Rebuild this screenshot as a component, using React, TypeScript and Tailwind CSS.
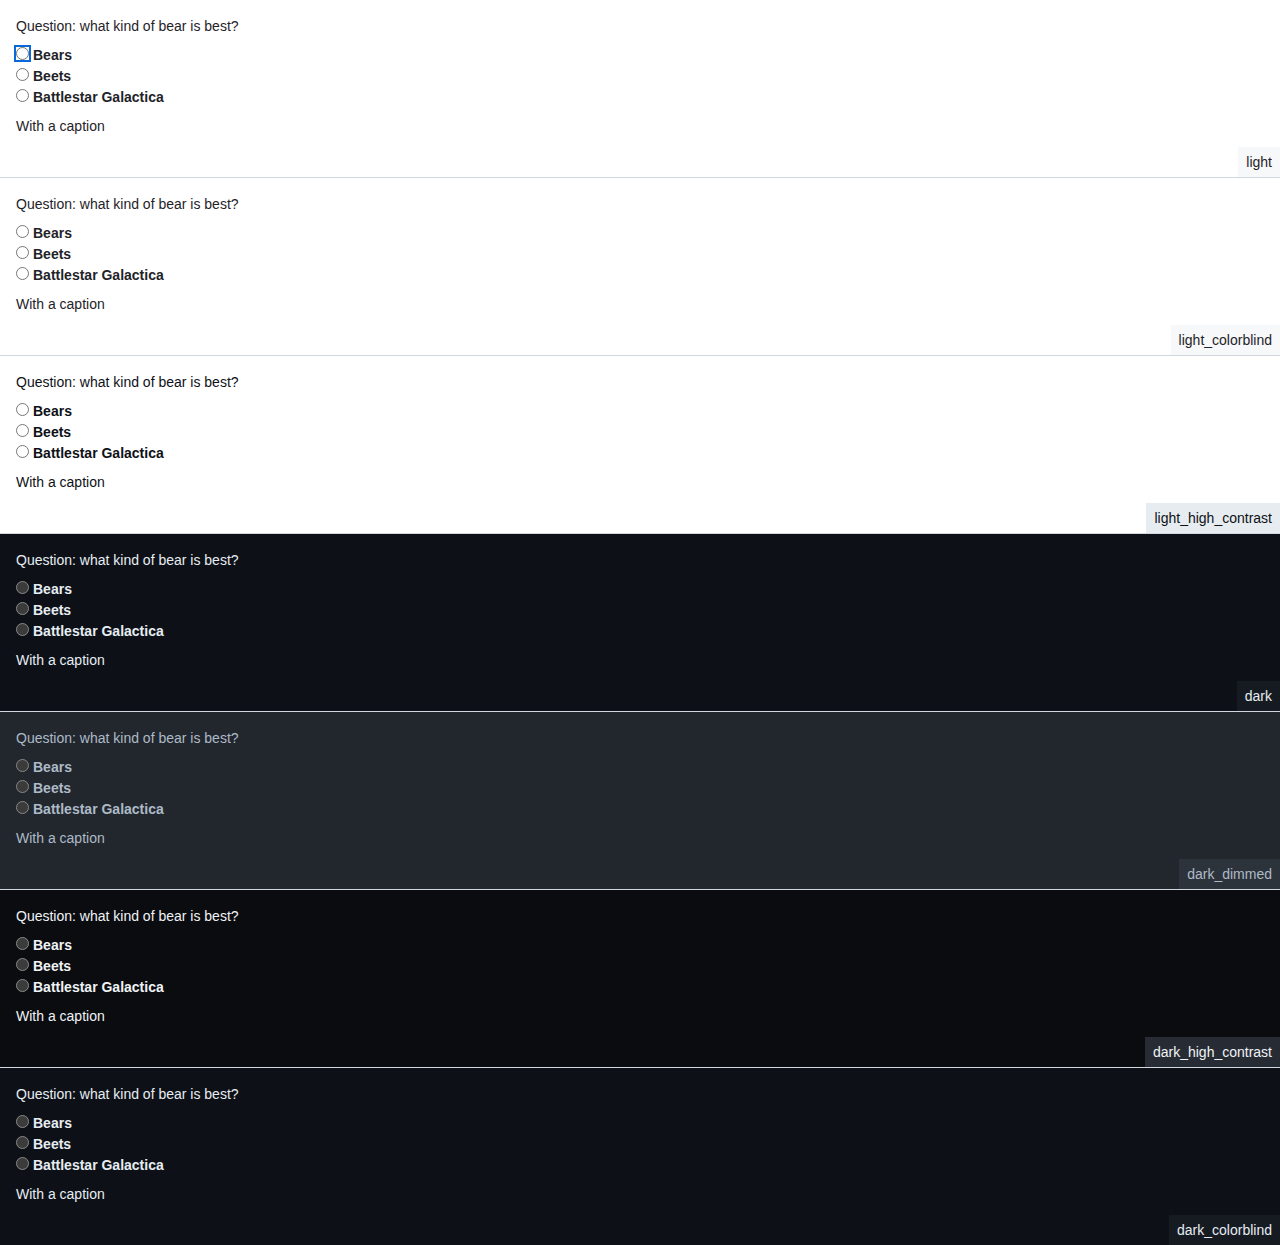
import React from 'react';

type Theme = {
  name: string;
  bg: string;
  fg: string;
  tag: string;
  dark: boolean;
};

const themes: Theme[] = [
  { name: 'light', bg: 'bg-[#ffffff]', fg: 'text-[#1f2328]', tag: 'bg-[#f6f8fa]', dark: false },
  { name: 'light_colorblind', bg: 'bg-[#ffffff]', fg: 'text-[#1f2328]', tag: 'bg-[#f6f8fa]', dark: false },
  { name: 'light_high_contrast', bg: 'bg-[#ffffff]', fg: 'text-[#0e1116]', tag: 'bg-[#e7ecf0]', dark: false },
  { name: 'dark', bg: 'bg-[#0d1117]', fg: 'text-[#e6edf3]', tag: 'bg-[#161b22]', dark: true },
  { name: 'dark_dimmed', bg: 'bg-[#22272e]', fg: 'text-[#adbac7]', tag: 'bg-[#2d333b]', dark: true },
  { name: 'dark_high_contrast', bg: 'bg-[#0a0c10]', fg: 'text-[#f0f3f6]', tag: 'bg-[#272b33]', dark: true },
  { name: 'dark_colorblind', bg: 'bg-[#0d1117]', fg: 'text-[#e6edf3]', tag: 'bg-[#161b22]', dark: true },
];

const options = ['Bears', 'Beets', 'Battlestar Galactica'];

function Panel({ theme, index, last }: { theme: Theme; index: number; last: boolean }) {
  return (
    <div
      className={`${theme.bg} ${theme.fg} h-[177px] box-content flex flex-col ${
        last ? '' : 'border-b border-[#d0d7de]'
      } ${theme.dark ? '[color-scheme:dark]' : '[color-scheme:light]'}`}
    >
      <div className="px-4 pt-4">
        <p className="text-sm leading-5">Question: what kind of bear is best?</p>
        <fieldset className="mt-2">
          {options.map((opt, i) => (
            <label key={opt} className="flex items-center h-[21px] text-sm font-bold">
              <input
                type="radio"
                name={`bear-${index}`}
                className={`m-0 mr-1 w-[13px] h-[13px] -mt-[2px] ${
                  index === 0 && i === 0 ? 'outline-2 outline-[#0969da] outline-offset-[0px]' : ''
                }`}
              />
              {opt}
            </label>
          ))}
        </fieldset>
        <p className="mt-[9px] text-sm leading-5">With a caption</p>
      </div>
      <div className="mt-auto self-end">
        <span className={`${theme.tag} block px-2 py-[5px] text-sm leading-5`}>{theme.name}</span>
      </div>
    </div>
  );
}

export default function App() {
  return (
    <div className="font-['Liberation_Sans',Arial,sans-serif]">
      {themes.map((t, i) => (
        <Panel key={t.name} theme={t} index={i} last={i === themes.length - 1} />
      ))}
    </div>
  );
}
